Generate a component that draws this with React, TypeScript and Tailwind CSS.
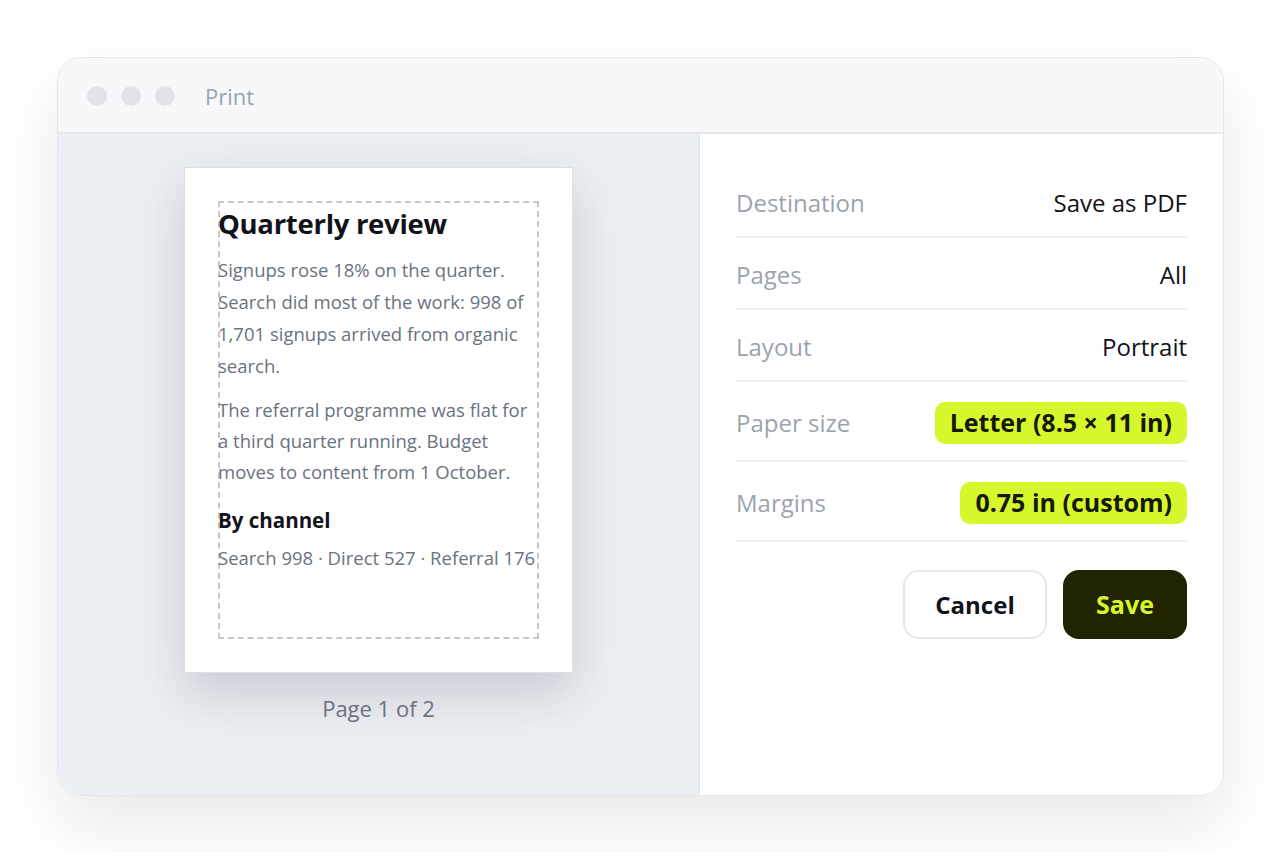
import React from "react";

interface Row {
    label: string;
    value: string;
    highlight?: boolean;
}

const rows: Row[] = [
    { label: "Destination", value: "Save as PDF" },
    { label: "Pages", value: "All" },
    { label: "Layout", value: "Portrait" },
    { label: "Paper size", value: "Letter (8.5 × 11 in)", highlight: true },
    { label: "Margins", value: "0.75 in (custom)", highlight: true },
];

const PagePreview: React.FC = () => (
    <div className="flex flex-col items-center pt-[33px]">
        <div className="w-[389px] h-[506px] bg-white border border-[#dcdfe4] shadow-[0_20px_48px_rgba(30,41,59,0.18)] p-[33px]">
            <div className="h-full border-2 border-dashed border-[#c4c6ca]">
                <div className="-ml-[2px]">
                    <h1 className="text-[27.5px] font-bold text-[#111318] leading-[34px] mt-[4px] tracking-[-0.3px]">
                        Quarterly review
                    </h1>
                    <p className="mt-[13px] text-[18.5px] leading-[32px] text-[#6b7280]">
                        Signups rose 18% on the quarter. Search did most of
                        the work: 998 of 1,701 signups arrived from organic
                        search.
                    </p>
                    <p className="mt-[12px] text-[18.5px] leading-[31px] text-[#6b7280]">
                        The referral programme was flat for a third quarter
                        running. Budget moves to content from 1 October.
                    </p>
                    <h2 className="mt-[19px] text-[20.5px] font-bold text-[#111318] leading-[28px]">
                        By channel
                    </h2>
                    <p className="mt-[8px] text-[18.5px] leading-[32px] text-[#6b7280] whitespace-nowrap">
                        Search 998 · Direct 527 · Referral 176
                    </p>
                </div>
            </div>
        </div>
        <div className="mt-[19px] text-[22px] text-[#6b7280]">Page 1 of 2</div>
    </div>
);

const SettingsPanel: React.FC = () => (
    <div className="flex flex-col px-[36px] pt-[32px]">
        {rows.map((row) => (
            <div
                key={row.label}
                className={`flex items-center justify-between pt-[4px] border-b-2 border-[#eeeff1] ${
                    row.highlight ? "h-[80px]" : "h-[72px]"
                }`}
            >
                <span className="text-[24px] text-[#9ca3af]">{row.label}</span>
                {row.highlight ? (
                    <span className="bg-[#d5f72c] rounded-[10px] px-[15px] h-[42px] flex items-center text-[25px] font-bold text-[#15180a]">
                        {row.value}
                    </span>
                ) : (
                    <span className="text-[24px] text-[#111318]">{row.value}</span>
                )}
            </div>
        ))}
        <div className="flex justify-end gap-4 mt-[28px]">
            <button className="w-[144px] h-[69px] rounded-[16px] border-2 border-[#e5e7eb] bg-white text-[24px] font-bold text-[#111318]">
                Cancel
            </button>
            <button className="w-[124px] h-[69px] rounded-[16px] bg-[#202400] text-[25px] font-bold text-[#d5f72c]">
                Save
            </button>
        </div>
    </div>
);

const App: React.FC = () => {
    return (
        <div
            className="w-[1280px] h-[852px] bg-white pt-[57px] pl-[57px]"
            style={{ fontFamily: '"Open Sans", "Noto Sans", sans-serif' }}
        >
            <div className="w-[1167px] h-[739px] rounded-[24px] border border-[#e3e5e8] overflow-hidden flex flex-col shadow-[0_30px_70px_rgba(0,0,0,0.09)]">
                {/* title bar */}
                <div className="h-[76px] shrink-0 bg-[#f7f8f9] border-b-2 border-[#e6e8eb] flex items-center pl-[29px]">
                    <div className="flex gap-[14px] mt-[1px]">
                        <span className="w-5 h-5 rounded-full bg-[#e1e3e6]" />
                        <span className="w-5 h-5 rounded-full bg-[#e1e3e6]" />
                        <span className="w-5 h-5 rounded-full bg-[#e1e3e6]" />
                    </div>
                    <span className="ml-[30px] mt-[3px] text-[22px] text-[#9ca3af]">Print</span>
                </div>
                <div className="flex flex-1 min-h-0">
                    <div className="w-[642px] shrink-0 bg-[#eceff3] border-r border-[#e3e5e8]">
                        <PagePreview />
                    </div>
                    <div className="flex-1 bg-white">
                        <SettingsPanel />
                    </div>
                </div>
            </div>
        </div>
    );
};

export default App;
